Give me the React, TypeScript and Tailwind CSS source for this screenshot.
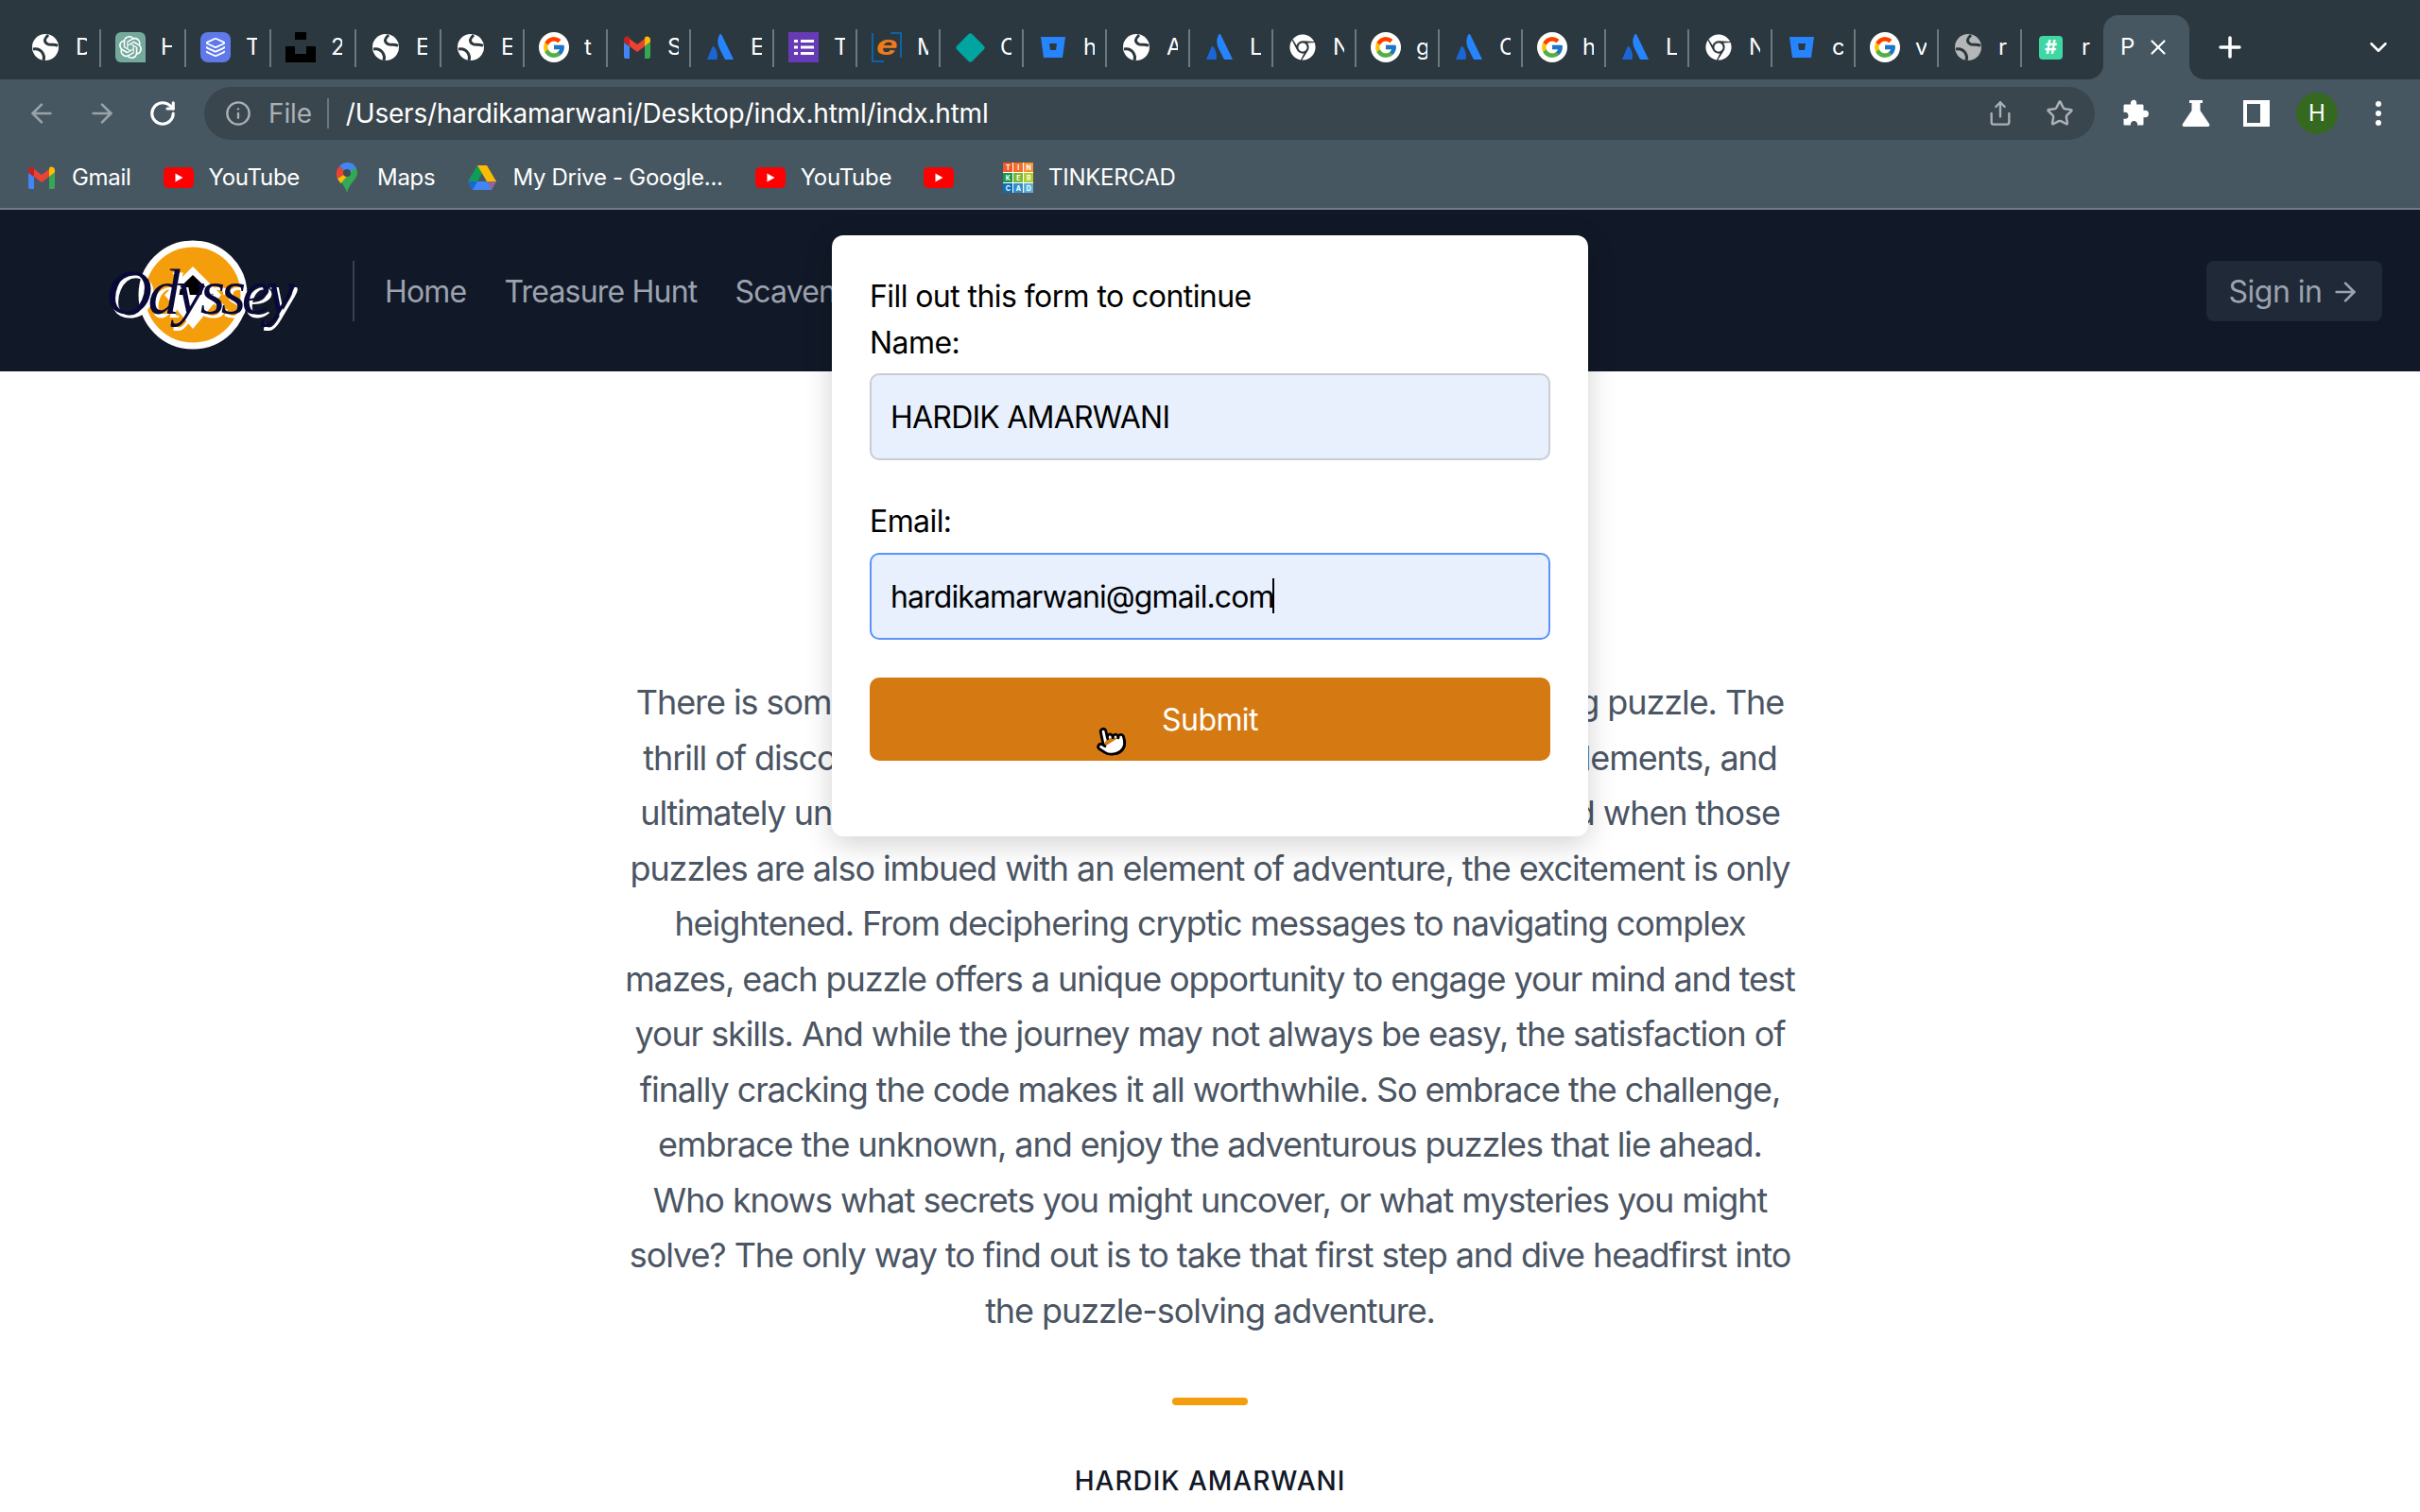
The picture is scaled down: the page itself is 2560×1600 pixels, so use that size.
import { ArrowLeft, ArrowRight, ChevronDown, Info, Layers, Plus, Pointer, RotateCw, Share, Star, X } from "lucide-react";
import { FaChrome } from "react-icons/fa";
import { FcGoogle } from "react-icons/fc";
import { SiOpenai } from "react-icons/si";

function Globe({ grey = false }: { grey?: boolean }) {
  return (
    <svg viewBox="0 0 32 32" className="w-8 h-8">
      <circle cx="16" cy="16" r="14" fill={grey ? "#b4b6b7" : "#ffffff"} />
      <path d="M19 3C15 7 14 10 18 12.500C21 14.500 25 12 29 14.500" fill="none" stroke="#2c383f" strokeWidth="3" />
      <path d="M3 18C8 17 11 19 13 22C15 25 15 27 14 30" fill="none" stroke="#2c383f" strokeWidth="3" />
    </svg>
  );
}

function GoogleIcon() {
  return (
    <div className="w-8 h-8 rounded-full bg-white flex items-center justify-center">
      <FcGoogle size={26} />
    </div>
  );
}

function GmailIcon() {
  return (
    <svg viewBox="0 0 32 32" className="w-8 h-8">
      <path d="M2 11v15a2 2 0 0 0 2 2h4V15z" fill="#4285f4" />
      <path d="M30 11v15a2 2 0 0 1-2 2h-4V15z" fill="#34a853" />
      <path d="M8 15l8 6 8-6V7l-8 6-8-6z" fill="#ea4335" />
      <path d="M24 7v8l6-4.500V8c0-3-3.500-4.500-5.500-3z" fill="#fbbc04" />
      <path d="M2 8v2.500L8 15V7L7.500 5C5.500 3.500 2 5 2 8z" fill="#c5221f" />
    </svg>
  );
}

function AtlassianIcon() {
  return (
    <svg viewBox="0 0 32 32" className="w-8 h-8">
      <path d="M15 3c-2.500 5-2 10 .5 15l5.500 11H30L17.500 3c-.7-1.300-2-1.300-2.500 0z" fill="#2684ff" />
      <path d="M9.500 15.500c-.6-.8-1.500-.7-2 .3L2 29h10.500c1-3 .5-9-3-13.500z" fill="#1a66d6" />
    </svg>
  );
}

function BitbucketIcon() {
  return (
    <svg viewBox="0 0 32 32" className="w-8 h-8">
      <path fillRule="evenodd" d="M3 5h26l-3 22H6zM12 12l1 7h6l1-7z" fill="#2684ff" />
    </svg>
  );
}

function DiamondIcon() {
  return <div className="w-[23px] h-[23px] ml-[5px] rounded-[3px] bg-[#00a4a0] rotate-45" />;
}

function UnsplashIcon() {
  return (
    <svg viewBox="0 0 32 32" className="w-8 h-8">
      <path d="M10 0h12v8H10zM0 15h10v8h12v-8h10v17H0z" fill="#000000" />
    </svg>
  );
}

function FormsIcon() {
  return (
    <svg viewBox="0 0 32 32" className="w-8 h-8">
      <rect width="32" height="32" fill="#673ab7" />
      <path d="M6 8h4v3H6zM13 8h14v3H13zM6 14.500h4v3H6zM13 14.500h14v3H13zM6 21h4v3H6zM13 21h14v3H13z" fill="#ffffff" />
    </svg>
  );
}

function EdIcon() {
  return (
    <svg viewBox="0 0 32 32" className="w-8 h-8">
      <path d="M1 1v30h12M20 1h11v26" fill="none" stroke="#0f62a8" strokeWidth="2" />
      <text x="12" y="24" textAnchor="middle" fontSize="30" fontWeight="700" fontStyle="italic" fill="#f07a1a" fontFamily="Liberation Sans, sans-serif" transform="scale(1.35 1)">e</text>
    </svg>
  );
}

function YoutubeIcon() {
  return (
    <svg viewBox="0 0 32 32" className="w-8 h-8">
      <rect x="0" y="5" width="32" height="22" rx="5" fill="#ff0000" />
      <path d="M12.500 11.500l8 4.500-8 4.500z" fill="#ffffff" />
    </svg>
  );
}

function MapsIcon() {
  return (
    <svg viewBox="0 0 32 32" className="w-8 h-8">
      <path d="M16 0a11 11 0 0 1 11 11c0 7-8 10-11 21-1-5-5-9-8-14z" fill="#34a853" />
      <path d="M8 4a11 11 0 0 1 8-4 11 11 0 0 1 10 6L16 11z" fill="#4285f4" />
      <path d="M8 4a11 11 0 0 0-2 13l10-6z" fill="#ea4335" />
      <path d="M6 17c1 2 2 3 3.500 5L21 9l-5 2z" fill="#fbbc04" />
      <circle cx="16" cy="11" r="4" fill="#3c4a52" />
    </svg>
  );
}

function DriveIcon() {
  return (
    <svg viewBox="0 0 32 32" className="w-8 h-8">
      <path d="M11 3h10L11 20H1z" fill="#0f9d58" />
      <path d="M21 3l10 17H21L11 3z" fill="#fbbc04" />
      <path d="M1 20h30l-5 9H6z" fill="#4285f4" />
      <path d="M11 20h-10l5 9z" fill="#1967d2" />
      <path d="M21 20h10l-5 9z" fill="#ea4335" opacity="0.5" />
    </svg>
  );
}

function TinkercadIcon() {
  const cells = [
    { l: "T", c: "bg-[#ef5a2a]" },
    { l: "I", c: "bg-[#f26f2b]" },
    { l: "N", c: "bg-[#f59336]" },
    { l: "K", c: "bg-[#17984c]" },
    { l: "E", c: "bg-[#7ab82e]" },
    { l: "R", c: "bg-[#b3cd2b]" },
    { l: "C", c: "bg-[#0f6cb5]" },
    { l: "A", c: "bg-[#2f8fcd]" },
    { l: "D", c: "bg-[#5ab0d9]" },
  ];
  return (
    <div className="w-8 h-8 grid grid-cols-3 gap-px bg-white">
      {cells.map((c) => (
        <div key={c.l} className={`${c.c} flex items-center justify-center text-[7px] font-bold leading-none text-white`}>
          {c.l}
        </div>
      ))}
    </div>
  );
}

const openaiIcon = (
  <div className="w-8 h-8 rounded-tl-[6px] rounded-tr-[6px] rounded-bl-[6px] bg-[#74aa9c] flex items-center justify-center text-white">
    <SiOpenai size={24} />
  </div>
);
const layersIcon = (
  <div className="w-8 h-8 rounded-lg bg-[#6079ea] flex items-center justify-center text-white">
    <Layers size={22} />
  </div>
);
const hashIcon = (
  <div className="w-[25px] h-[25px] ml-[3px] rounded-[4px] bg-[#3fd8a4] text-white text-[20px] font-bold leading-[25px] text-center">#</div>
);
const chromeIcon = (
  <div className="w-8 h-8 flex items-center justify-center text-white">
    <FaChrome size={28} />
  </div>
);

const tabs = [
  { icon: <Globe />, label: "D" },
  { icon: openaiIcon, label: "H" },
  { icon: layersIcon, label: "T" },
  { icon: <UnsplashIcon />, label: "2" },
  { icon: <Globe />, label: "E" },
  { icon: <Globe />, label: "E" },
  { icon: <GoogleIcon />, label: "t" },
  { icon: <GmailIcon />, label: "S" },
  { icon: <AtlassianIcon />, label: "E" },
  { icon: <FormsIcon />, label: "T" },
  { icon: <EdIcon />, label: "M" },
  { icon: <DiamondIcon />, label: "C" },
  { icon: <BitbucketIcon />, label: "h" },
  { icon: <Globe />, label: "A" },
  { icon: <AtlassianIcon />, label: "L" },
  { icon: chromeIcon, label: "N" },
  { icon: <GoogleIcon />, label: "g" },
  { icon: <AtlassianIcon />, label: "C" },
  { icon: <GoogleIcon />, label: "h" },
  { icon: <AtlassianIcon />, label: "L" },
  { icon: chromeIcon, label: "N" },
  { icon: <BitbucketIcon />, label: "c" },
  { icon: <GoogleIcon />, label: "v" },
  { icon: <Globe grey />, label: "r" },
  { icon: hashIcon, label: "r" },
];

const paragraph = [
  "There is something totally satisfying about solving a challenging puzzle. The",
  "thrill of discovering strange clues, piecing together disparate elements, and",
  "ultimately unraveling the solution is an exciting experience. And when those",
  "puzzles are also imbued with an element of adventure, the excitement is only",
  "heightened. From deciphering cryptic messages to navigating complex",
  "mazes, each puzzle offers a unique opportunity to engage your mind and test",
  "your skills. And while the journey may not always be easy, the satisfaction of",
  "finally cracking the code makes it all worthwhile. So embrace the challenge,",
  "embrace the unknown, and enjoy the adventurous puzzles that lie ahead.",
  "Who knows what secrets you might uncover, or what mysteries you might",
  "solve? The only way to find out is to take that first step and dive headfirst into",
  "the puzzle-solving adventure.",
];

function TabStrip() {
  return (
    <div className="h-[84px] bg-[#2c383f] flex items-start pl-[17px] text-white text-2xl">
      {tabs.map((t, i) => (
        <div key={i} className={`${i < 5 ? "w-[90px]" : "w-[88px]"} h-[84px] shrink-0 flex items-center pl-[15px] pt-4 relative`}>
          <div className="w-8 h-8 flex items-center">{t.icon}</div>
          <div className="ml-[16px] w-[12px] overflow-hidden leading-8">{t.label}</div>
          <div className="absolute right-0 top-[31px] w-[2px] h-10 bg-[#6d787e]" />
        </div>
      ))}
      <div className="relative -ml-[2px] mt-4 w-[91px] h-[68px] shrink-0 bg-[#465761] rounded-t-2xl flex items-center pl-[18px]">
        <div className="absolute -left-4 bottom-0 w-4 h-4 bg-[#465761]">
          <div className="w-4 h-4 bg-[#2c383f] rounded-br-2xl" />
        </div>
        <div className="absolute -right-4 bottom-0 w-4 h-4 bg-[#465761]">
          <div className="w-4 h-4 bg-[#2c383f] rounded-bl-2xl" />
        </div>
        <span className="w-[16px] overflow-hidden leading-8">P</span>
        <X size={26} className="ml-[11px]" />
      </div>
      <Plus size={34} strokeWidth={2.5} className="ml-[26px] mt-[33px]" />
      <ChevronDown size={30} strokeWidth={2} className="ml-auto mr-[29px] mt-[35px]" />
    </div>
  );
}

function ToolBar() {
  return (
    <div className="h-[64px] bg-[#465761] flex items-start pt-2">
      <div className="h-14 flex items-center pl-[28px] gap-[32px]">
        <ArrowLeft size={32} strokeWidth={2} className="text-[#98a3a9]" />
        <ArrowRight size={32} strokeWidth={2} className="text-[#98a3a9]" />
        <RotateCw size={30} strokeWidth={2.5} className="text-white ml-[1px]" />
      </div>
      <div className="ml-[29px] w-[2000px] h-14 rounded-full bg-[#3a464e] flex items-center pl-[22px] pr-[22px]">
        <Info size={28} className="text-[#aab0b4]" />
        <span className="ml-[18px] text-[28px] tracking-[-0.005em] text-[#aab0b4]">File</span>
        <div className="ml-[16px] w-[2px] h-8 bg-[#6d787e]" />
        <span className="ml-[18px] text-[28px] tracking-[-0.007em] text-white">/Users/hardikamarwani/Desktop/indx.html/indx.html</span>
        <Share size={28} className="ml-auto text-[#aab0b4]" />
        <Star size={30} strokeWidth={2} className="ml-[34px] text-[#aab0b4]" />
      </div>
      <div className="h-14 flex items-center text-white">
        <svg viewBox="0 0 32 32" className="w-8 h-8 ml-[27px]" fill="#ffffff">
          <path d="M13 2c2.500-1 5 1 4 4.500h6c1 0 1.500.5 1.500 1.500v5c3.500-1 5.500 1 5.500 3.500S28 21 24.500 20v7c0 1-.5 1.500-1.500 1.500h-5c.5-3-1.500-4.500-3.500-4.500s-4 1.500-3.500 4.500H5c-1 0-1.500-.5-1.500-1.500v-5.500c3 1 5-.5 5-3s-2-4.500-5-3.500V8c0-1 .5-1.500 1.500-1.500h6C10.500 4.500 11 3 13 2z" />
        </svg>
        <svg viewBox="0 0 32 32" className="w-8 h-8 ml-[32px]" fill="#ffffff">
          <path d="M9 2h14v3h-2.500v8L30 27c1 1.800 0 3-1.500 3h-25C2 30 1 28.800 2 27l9.500-14V5H9z" />
        </svg>
        <svg viewBox="0 0 32 32" className="w-8 h-8 ml-[32px]">
          <path fillRule="evenodd" d="M2 2h28v28H2zM6 6v20h14V6z" fill="#ffffff" />
        </svg>
        <div className="ml-[26px] w-11 h-11 rounded-full bg-[#35691f] flex items-center justify-center text-2xl">H</div>
        <svg viewBox="0 0 32 32" className="w-8 h-8 ml-[27px]" fill="#ffffff">
          <circle cx="16" cy="6" r="3" />
          <circle cx="16" cy="16" r="3" />
          <circle cx="16" cy="26" r="3" />
        </svg>
      </div>
    </div>
  );
}

function Bookmark({ icon, label, className = "" }: { icon: React.ReactNode; label?: string; className?: string }) {
  return (
    <div className={`flex items-center gap-[16px] ${className}`}>
      <div className="w-8 h-8">{icon}</div>
      {label && <span>{label}</span>}
    </div>
  );
}

function BookmarksBar() {
  return (
    <div className="h-[74px] bg-[#465761] border-b-2 border-[#6f7e86] flex items-center pl-[28px] pt-[8px] gap-[34px] text-white text-2xl tracking-[-0.012em]">
      <Bookmark icon={<GmailIcon />} label="Gmail" />
      <Bookmark icon={<YoutubeIcon />} label="YouTube" />
      <Bookmark icon={<MapsIcon />} label="Maps" />
      <Bookmark icon={<DriveIcon />} label="My Drive - Google..." />
      <Bookmark icon={<YoutubeIcon />} label="YouTube" />
      <Bookmark icon={<YoutubeIcon />} className="mr-[18px]" />
      <Bookmark icon={<TinkercadIcon />} label="TINKERCAD" />
    </div>
  );
}

function Logo() {
  return (
    <div className="relative w-[200px] h-[116px] mt-[9px] flex items-center justify-center shrink-0">
      <svg viewBox="0 0 116 116" className="w-[116px] h-[116px]">
        <circle cx="58" cy="58" r="54" fill="#f59e0b" stroke="#ffffff" strokeWidth="7" />
        <path d="M58 28l30 30-30 36-30-36z" fill="#ffffff" />
        <path d="M58 37l22 21H36z" fill="#000000" />
      </svg>
      <span className="absolute left-[8px] top-[19px] text-[68px] leading-[72px] italic tracking-[-4.5px] text-[#08083a] font-[family-name:'Liberation_Serif',serif] [text-shadow:3px_4px_0_#ffffff]">
        Odyssey
      </span>
    </div>
  );
}

function Header() {
  return (
    <header className="h-[171px] bg-[#111827] flex items-center pl-[104px] pr-10">
      <Logo />
      <nav className="ml-[69px] pl-[32px] pt-[2px] border-l-2 border-[#374151] h-[64px] flex items-center gap-10 text-[32px] tracking-[-0.025em] text-[#9ca3af]">
        <a>Home</a>
        <a>Treasure Hunt</a>
        <a>Scavenger Hunt</a>
      </nav>
      <button className="ml-auto h-16 w-[186px] pt-[2px] rounded-lg bg-[#1f2937] text-[32px] tracking-[-0.015em] text-[#9ca3af] flex items-center justify-center gap-2">
        Sign in
        <ArrowRight size={32} />
      </button>
    </header>
  );
}

function FormModal() {
  return (
    <div className="absolute left-[880px] top-[249px] w-[800px] h-[636px] bg-white rounded-xl shadow-[0_8px_30px_rgba(0,0,0,0.18)] p-10 pt-[41px] text-[32px] leading-[48px] tracking-[-0.018em] text-black">
      <h2>Fill out this form to continue</h2>
      <label className="block mt-[1px]">Name:</label>
      <input
        readOnly
        value="HARDIK AMARWANI"
        className="block mt-[8px] w-full h-[92px] px-[20px] rounded-[10px] border-2 border-[#c9cdd1] bg-[#e8f0fe] outline-none tracking-[-0.024em]"
      />
      <label className="block mt-[41px]">Email:</label>
      <div className="relative mt-[9px]">
        <input
          readOnly
          value="hardikamarwani@gmail.com"
          className="block w-full h-[92px] px-[20px] rounded-[10px] border-2 border-[#5b93f8] bg-[#e8f0fe] outline-none tracking-[-0.028em]"
        />
        <div className="absolute left-[426px] top-[27px] w-[2px] h-[37px] bg-black" />
      </div>
      <button className="relative block mt-10 w-full h-[88px] pt-[2px] rounded-[10px] bg-[#d57a12] text-white">
        Submit
        <Pointer size={34} fill="#ffffff" stroke="#000000" strokeWidth={2} className="absolute left-[238px] top-[50px] -rotate-12" />
      </button>
    </div>
  );
}

export default function App() {
  return (
    <div className="relative h-[1600px] overflow-hidden bg-white font-[family-name:Inter,sans-serif]">
      <TabStrip />
      <ToolBar />
      <BookmarksBar />
      <Header />
      <main className="pt-[321px] flex flex-col items-center text-center">
        <p className="text-[36px] leading-[58.5px] tracking-[-0.03em] text-[#4b5563] whitespace-nowrap">
          {paragraph.map((line) => (
            <span key={line} className="block">{line}</span>
          ))}
        </p>
        <div className="mt-[63px] w-20 h-2 rounded-full bg-[#f59e0b]" />
        <h3 className="mt-[59px] text-[28px] leading-[42px] font-medium tracking-[0.035em] text-[#111827]">HARDIK AMARWANI</h3>
        <p className="mt-[2px] text-[28px] leading-[42px] text-[#6b7280]">Web Developer</p>
      </main>
      <FormModal />
    </div>
  );
}
